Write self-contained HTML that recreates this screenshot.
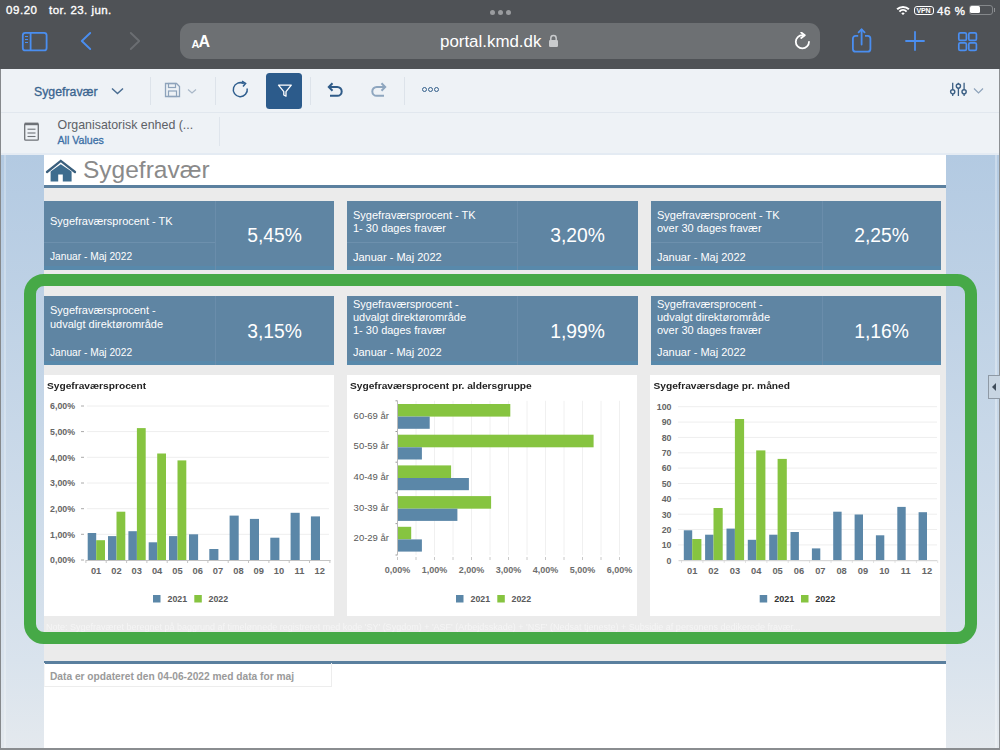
<!DOCTYPE html>
<html><head><meta charset="utf-8">
<style>
*{margin:0;padding:0;box-sizing:border-box}
html,body{width:1000px;height:750px;overflow:hidden;background:#fff;font-family:"Liberation Sans",sans-serif}
.a{position:absolute;white-space:nowrap}
.sep{position:absolute;width:1px;background:#dde3ea}
.card{position:absolute;background:#5f85a3;color:#fff;height:69px;width:290px}
.card .bb{position:absolute;left:0;right:0;bottom:0;height:4px;background:#5889ab}
.card .vd{position:absolute;left:171px;top:0;width:1px;height:69px;background:#6a8dab}
.card .hd{position:absolute;left:0;top:41px;width:171px;height:1px;background:#6d90ad}
.card .tt{position:absolute;left:6px;top:1px;width:165px;height:41px;display:flex;align-items:center;font-size:11px;line-height:13.4px}
.card .dt{position:absolute;left:6px;top:42px;height:28px;display:flex;align-items:center;font-size:10.2px}
.card .v{position:absolute;left:171px;right:0;top:0;height:69px;display:flex;align-items:center;justify-content:center;font-size:19.3px;padding-top:2.5px}
.ch{position:absolute;background:#fff;top:375px;height:241px}
.cht{position:absolute;font-size:10.2px;font-weight:bold;color:#222;top:380.2px;transform:scaleY(0.92);transform-origin:left bottom}
</style></head><body>

<div class="a" style="left:0;top:0;width:1000px;height:69px;background:#4f5256"></div>
<div class="a" style="left:6px;top:1.8px;font-size:11.5px;letter-spacing:0.55px;color:#fff;line-height:16px;-webkit-text-stroke:0.35px #fff">09.20</div>
<div class="a" style="left:49px;top:1.8px;font-size:11.5px;letter-spacing:0.45px;color:#fff;line-height:16px;-webkit-text-stroke:0.35px #fff">tor. 23. jun.</div>
<div class="a" style="left:489.5px;top:9.5px;width:5px;height:5px;border-radius:50%;background:#9a9c9f"></div>
<div class="a" style="left:497.5px;top:9.5px;width:5px;height:5px;border-radius:50%;background:#9a9c9f"></div>
<div class="a" style="left:505.5px;top:9.5px;width:5px;height:5px;border-radius:50%;background:#9a9c9f"></div>
<svg class="a" style="left:896px;top:4.5px" width="14" height="10" viewBox="0 0 14 10">
<path d="M1.1 4.3 A8.4 8.4 0 0 1 12.9 4.3" stroke="#fff" stroke-width="2" fill="none"/>
<path d="M3.4 6.6 A5.1 5.1 0 0 1 10.6 6.6" stroke="#fff" stroke-width="2" fill="none"/>
<path d="M5.3 8.4 L7 10 L8.7 8.4 A2.4 2.4 0 0 0 5.3 8.4 Z" fill="#fff"/></svg>
<div class="a" style="left:913.5px;top:5.5px;width:20px;height:9.5px;border:1.2px solid #fff;border-radius:3px;font-size:7px;line-height:7px;color:#fff;font-weight:bold;text-align:center;letter-spacing:-0.2px">VPN</div>
<div class="a" style="left:937px;top:2.5px;font-size:11.5px;letter-spacing:0.6px;color:#fff;line-height:16px;-webkit-text-stroke:0.35px #fff">46 %</div>
<div class="a" style="left:968.5px;top:4.5px;width:24px;height:10px;border:1.3px solid #85888b;border-radius:3px"></div>
<div class="a" style="left:970.2px;top:6.2px;width:10px;height:6.6px;background:#fff;border-radius:1.5px"></div>
<div class="a" style="left:993.5px;top:8px;width:1.5px;height:4px;background:#8d8f92"></div>
<svg class="a" style="left:21px;top:31px" width="28" height="22" viewBox="0 0 28 22">
<rect x="1.8" y="1.8" width="23.8" height="17.6" rx="2.5" stroke="#4a8ef0" stroke-width="1.8" fill="none"/>
<line x1="9.6" y1="1.8" x2="9.6" y2="19.4" stroke="#4a8ef0" stroke-width="1.8"/>
<line x1="4" y1="5.5" x2="7" y2="5.5" stroke="#4a8ef0" stroke-width="1"/>
<line x1="4" y1="8.5" x2="7" y2="8.5" stroke="#4a8ef0" stroke-width="1"/>
<line x1="4" y1="11.5" x2="7" y2="11.5" stroke="#4a8ef0" stroke-width="1"/>
</svg>
<svg class="a" style="left:78px;top:30px" width="16" height="22" viewBox="0 0 16 22">
<path d="M12.2 3 L3.8 11 L12.2 19" stroke="#4a8ef0" stroke-width="1.9" fill="none" stroke-linecap="round" stroke-linejoin="round"/></svg>
<svg class="a" style="left:127px;top:30px" width="16" height="22" viewBox="0 0 16 22">
<path d="M3.8 3 L12.2 11 L3.8 19" stroke="#6b6e72" stroke-width="1.9" fill="none" stroke-linecap="round" stroke-linejoin="round"/></svg>
<div class="a" style="left:180px;top:23px;width:640px;height:35.5px;background:#6d7073;border-radius:11px"></div>
<div class="a" style="left:191.5px;top:37.5px;font-size:11px;font-weight:bold;color:#fff;line-height:12px">A</div>
<div class="a" style="left:198.5px;top:33.4px;font-size:16px;font-weight:bold;color:#fff;line-height:18px">A</div>
<div class="a" style="left:440px;top:31.5px;font-size:16.9px;color:#fff;line-height:20px">portal.kmd.dk</div>
<svg class="a" style="left:548px;top:34px" width="11" height="14" viewBox="0 0 11 14">
<path d="M2.8 6 V4.2 A2.7 2.7 0 0 1 8.2 4.2 V6" stroke="#c9cbcd" stroke-width="1.5" fill="none"/>
<rect x="1" y="6" width="9" height="7" rx="1.2" fill="#c9cbcd"/></svg>
<svg class="a" style="left:793px;top:32px" width="19" height="19" viewBox="0 0 19 19">
<path d="M9.5 3.2 A6.6 6.6 0 1 0 16 9.8" stroke="#fff" stroke-width="1.8" fill="none" stroke-linecap="round"/>
<path d="M8.2 0.5 L11.8 3.2 L8.2 6" stroke="#fff" stroke-width="1.8" fill="none" stroke-linecap="round" stroke-linejoin="round"/></svg>
<svg class="a" style="left:850px;top:27px" width="24" height="27" viewBox="0 0 24 27">
<path d="M8.2 8.8 H5.6 A2.7 2.7 0 0 0 2.9 11.5 V21.9 A2.7 2.7 0 0 0 5.6 24.6 H17.7 A2.7 2.7 0 0 0 20.4 21.9 V11.5 A2.7 2.7 0 0 0 17.7 8.8 H15" stroke="#4a8ef0" stroke-width="1.8" fill="none"/>
<line x1="11.6" y1="2.5" x2="11.6" y2="17.5" stroke="#4a8ef0" stroke-width="1.8" stroke-linecap="round"/>
<path d="M8.6 5.4 L11.6 2.4 L14.6 5.4" stroke="#4a8ef0" stroke-width="1.8" fill="none" stroke-linecap="round" stroke-linejoin="round"/></svg>
<svg class="a" style="left:904px;top:30px" width="22" height="22" viewBox="0 0 22 22">
<line x1="11" y1="2" x2="11" y2="20" stroke="#4a8ef0" stroke-width="1.8" stroke-linecap="round"/>
<line x1="2" y1="11" x2="20" y2="11" stroke="#4a8ef0" stroke-width="1.8" stroke-linecap="round"/></svg>
<svg class="a" style="left:957px;top:31px" width="22" height="22" viewBox="0 0 22 22">
<rect x="1.8" y="1.8" width="7.6" height="7.6" rx="1.5" stroke="#4a8ef0" stroke-width="1.7" fill="none"/>
<rect x="11.8" y="1.8" width="7.6" height="7.6" rx="1.5" stroke="#4a8ef0" stroke-width="1.7" fill="none"/>
<rect x="1.8" y="11.8" width="7.6" height="7.6" rx="1.5" stroke="#4a8ef0" stroke-width="1.7" fill="none"/>
<rect x="11.8" y="11.8" width="7.6" height="7.6" rx="1.5" stroke="#4a8ef0" stroke-width="1.7" fill="none"/></svg>
<div class="a" style="left:0;top:69px;width:1000px;height:43px;background:#eef2f6"></div>
<div class="a" style="left:0;top:112px;width:1000px;height:1px;background:#e1e7ee"></div>
<div class="a" style="left:0;top:113px;width:1000px;height:42px;background:#eef2f6"></div>
<div class="a" style="left:34px;top:83.5px;font-size:12.3px;color:#39648f;line-height:16px;-webkit-text-stroke:0.3px #39648f">Sygefravær</div>
<svg class="a" style="left:109px;top:84px" width="17" height="12" viewBox="0 0 17 12">
<path d="M3 4.5 L8.5 9.5 L14 4.5" stroke="#4a6d92" stroke-width="1.5" fill="none"/></svg>
<div class="sep" style="left:150px;top:77px;height:28px"></div>
<svg class="a" style="left:164px;top:82px" width="17" height="16" viewBox="0 0 17 16">
<path d="M1.5 1.5 H12.5 L15.5 4.5 V14.5 H1.5 Z" stroke="#8ea3bb" stroke-width="1.3" fill="none"/>
<rect x="4.5" y="1.5" width="7" height="4" stroke="#8ea3bb" stroke-width="1.2" fill="none"/>
<rect x="4.5" y="9" width="8" height="5.5" stroke="#8ea3bb" stroke-width="1.2" fill="none"/></svg>
<svg class="a" style="left:187px;top:88px" width="10" height="7" viewBox="0 0 10 7">
<path d="M1 1.5 L5 5 L9 1.5" stroke="#a9b8c8" stroke-width="1.2" fill="none"/></svg>
<div class="sep" style="left:215px;top:77px;height:28px"></div>
<svg class="a" style="left:231px;top:80px" width="19" height="19" viewBox="0 0 19 19">
<path d="M12.8 3.6 A7 7 0 1 0 16.2 8.5" stroke="#2f5e8e" stroke-width="1.5" fill="none"/>
<path d="M11 1.2 L14.6 3.5 L12 6.6" stroke="#2f5e8e" stroke-width="1.5" fill="none"/></svg>
<div class="a" style="left:266px;top:73px;width:36px;height:36px;background:#2c5b8b;border-radius:3.5px"></div>
<svg class="a" style="left:276px;top:82px" width="17" height="17" viewBox="0 0 17 17">
<path d="M2.5 3.2 H15.3 L10 9.6 V14.2 L7.8 13 V9.6 Z" stroke="#fff" stroke-width="1.3" fill="none" stroke-linejoin="round"/></svg>
<div class="sep" style="left:310px;top:77px;height:28px"></div>
<svg class="a" style="left:326px;top:81px" width="19" height="18" viewBox="0 0 19 18">
<path d="M6.5 2.2 L2.8 6 L6.5 9.8" stroke="#2f5b88" stroke-width="2" fill="none"/>
<path d="M3 6 H11.3 A4.4 4.4 0 0 1 11.3 14.8 H4" stroke="#2f5b88" stroke-width="2" fill="none"/></svg>
<svg class="a" style="left:369px;top:81px" width="19" height="18" viewBox="0 0 19 18">
<path d="M12.5 2.2 L16.2 6 L12.5 9.8" stroke="#8ea6bf" stroke-width="2" fill="none"/>
<path d="M16 6 H7.7 A4.4 4.4 0 0 0 7.7 14.8 H15" stroke="#8ea6bf" stroke-width="2" fill="none"/></svg>
<div class="sep" style="left:404px;top:77px;height:28px"></div>
<div class="a" style="left:421.59999999999997px;top:87.2px;width:5.2px;height:5.2px;border-radius:50%;border:1.7px solid #34608b"></div>
<div class="a" style="left:427.7px;top:87.2px;width:5.2px;height:5.2px;border-radius:50%;border:1.7px solid #34608b"></div>
<div class="a" style="left:433.79999999999995px;top:87.2px;width:5.2px;height:5.2px;border-radius:50%;border:1.7px solid #34608b"></div>
<svg class="a" style="left:949px;top:81px" width="20" height="17" viewBox="0 0 20 17">
<line x1="3.7" y1="1.8" x2="3.7" y2="15" stroke="#3b5f84" stroke-width="1.3"/>
<line x1="9.4" y1="1.8" x2="9.4" y2="15" stroke="#3b5f84" stroke-width="1.3"/>
<line x1="15.1" y1="1.8" x2="15.1" y2="15" stroke="#3b5f84" stroke-width="1.3"/>
<circle cx="3.7" cy="10.8" r="2.1" fill="#eef2f6" stroke="#3b5f84" stroke-width="1.4"/>
<circle cx="9.4" cy="5.1" r="2.1" fill="#eef2f6" stroke="#3b5f84" stroke-width="1.4"/>
<circle cx="15.1" cy="10.8" r="2.1" fill="#eef2f6" stroke="#3b5f84" stroke-width="1.4"/></svg>
<svg class="a" style="left:973px;top:87px" width="11" height="8" viewBox="0 0 11 8">
<path d="M1 1.5 L5.5 6 L10 1.5" stroke="#8ea3bb" stroke-width="1.2" fill="none"/></svg>
<svg class="a" style="left:23px;top:121px" width="17" height="21" viewBox="0 0 17 21">
<rect x="1.7" y="2.6" width="13.6" height="16.6" rx="1" stroke="#6e7277" stroke-width="1.3" fill="none"/>
<rect x="1.7" y="1.6" width="13.6" height="2.6" fill="#6e7277"/>
<line x1="4.5" y1="8.2" x2="12.5" y2="8.2" stroke="#6e7277" stroke-width="1.1"/>
<line x1="4.5" y1="12" x2="12.5" y2="12" stroke="#6e7277" stroke-width="1.1"/>
<line x1="4.5" y1="15.5" x2="12.5" y2="15.5" stroke="#6e7277" stroke-width="1.1"/></svg>
<div class="a" style="left:57.5px;top:117.6px;font-size:12.4px;color:#5d6166;line-height:15px">Organisatorisk enhed (...</div>
<div class="a" style="left:57.5px;top:133.5px;font-size:10.6px;color:#3b6fa6;line-height:13px;-webkit-text-stroke:0.3px #3b6fa6">All Values</div>
<div class="sep" style="left:218.5px;top:117px;height:29px;width:1.5px;background:#dfe5ec"></div>
<div class="a" style="left:0;top:153px;width:1000px;height:2px;background:#e4ebf3"></div>
<div class="a" style="left:0;top:155px;width:44px;height:595px;background:linear-gradient(#b3cae2,#d9e3ed 85%,#e4e9ee)"></div>
<div class="a" style="left:0;top:69px;width:1.2px;height:681px;background:#86898c"></div>
<div class="a" style="left:4px;top:155px;width:2px;height:595px;background:rgba(255,255,255,0.25)"></div>
<div class="a" style="left:945.5px;top:155px;width:54.5px;height:595px;background:linear-gradient(#b3cae2,#d9e3ed 85%,#e4e9ee)"></div>
<div class="a" style="left:995px;top:155px;width:2px;height:595px;background:rgba(255,255,255,0.3)"></div>
<div class="a" style="left:998.5px;top:69px;width:1.5px;height:681px;background:#8d9093"></div>
<div class="a" style="left:44px;top:156px;width:901.5px;height:594px;background:#fff"></div>
<svg class="a" style="left:44px;top:156px" width="40" height="30" viewBox="0 0 40 30">
<path d="M3 16 L16.8 4.9 L31 16" stroke="#3a5f7d" stroke-width="2.3" fill="none" stroke-linecap="round"/>
<path d="M6.6 15.4 L16.8 8.3 L27.6 15.4 V25.6 H18.8 V18.4 H14.2 V25.6 H6.6 Z" fill="#3d6c8e"/></svg>
<div class="a" style="left:83px;top:155px;font-size:24.5px;color:#8a8a8a;line-height:30px">Sygefravær</div>
<div class="a" style="left:44px;top:185px;width:901.5px;height:3px;background:#5b809f"></div>
<div class="a" style="left:44px;top:188px;width:901.5px;height:473px;background:#ebebeb"></div>
<div class="a" style="left:44px;top:661px;width:901.5px;height:2.8px;background:#5a7f9e"></div>
<div class="a" style="left:44px;top:663px;width:288px;height:24px;border:1px solid #ededed;border-top:none;border-left-color:#f6f6f6"></div>
<div class="a" style="left:50px;top:670px;font-size:10.2px;color:#9a9a9a;font-weight:bold;line-height:14px">Data er opdateret den 04-06-2022 med data for maj</div>
<div class="card" style="left:44px;top:200.5px;width:290px"><div class="bb"></div><div class="vd" style="left:171px"></div><div class="hd"></div><div class="tt"><div>Sygefraværsprocent - TK</div></div><div class="dt" style="font-size:10.2px">Januar - Maj 2022</div><div class="v" style="left:171px">5,45%</div></div>
<div class="card" style="left:347px;top:200.5px;width:291px"><div class="bb"></div><div class="vd" style="left:170px"></div><div class="hd"></div><div class="tt"><div>Sygefraværsprocent - TK<br>1- 30 dages fravær</div></div><div class="dt" style="font-size:11px">Januar - Maj 2022</div><div class="v" style="left:170px">3,20%</div></div>
<div class="card" style="left:651px;top:200.5px;width:290px"><div class="bb"></div><div class="vd" style="left:171px"></div><div class="hd"></div><div class="tt"><div>Sygefraværsprocent - TK<br>over 30 dages fravær</div></div><div class="dt" style="font-size:11px">Januar - Maj 2022</div><div class="v" style="left:171px">2,25%</div></div>
<div class="card" style="left:44px;top:296.2px;width:290px"><div class="bb"></div><div class="vd" style="left:171px"></div><div class="tt"><div>Sygefraværsprocent -<br>udvalgt direktørområde</div></div><div class="dt" style="font-size:10.2px">Januar - Maj 2022</div><div class="v" style="left:171px">3,15%</div></div>
<div class="card" style="left:347px;top:296.2px;width:291px"><div class="bb"></div><div class="vd" style="left:170px"></div><div class="tt"><div>Sygefraværsprocent -<br>udvalgt direktørområde<br>1- 30 dages fravær</div></div><div class="dt" style="font-size:11px">Januar - Maj 2022</div><div class="v" style="left:170px">1,99%</div></div>
<div class="card" style="left:651px;top:296.2px;width:290px"><div class="bb"></div><div class="vd" style="left:171px"></div><div class="tt"><div>Sygefraværsprocent -<br>udvalgt direktørområde<br>over 30 dages fravær</div></div><div class="dt" style="font-size:11px">Januar - Maj 2022</div><div class="v" style="left:171px">1,16%</div></div>
<div class="ch" style="left:44px;width:290px"></div>
<div class="ch" style="left:347px;width:290px"></div>
<div class="ch" style="left:650px;width:290px"></div>
<div class="cht" style="left:47px">Sygefraværsprocent</div>
<div class="cht" style="left:350px">Sygefraværsprocent pr. aldersgruppe</div>
<div class="cht" style="left:653.5px">Sygefraværsdage pr. måned</div>
<svg class="a" style="left:0;top:0" width="1000" height="750" viewBox="0 0 1000 750" font-family="Liberation Sans"><line x1="81" y1="560.0" x2="84" y2="560.0" stroke="#aaa" stroke-width="1"/><text x="75" y="563.2" font-size="8.8" font-weight="bold" fill="#666" text-anchor="end">0,00%</text><line x1="87" y1="534.3" x2="329" y2="534.3" stroke="#eeeeee" stroke-width="1"/><line x1="81" y1="534.3" x2="84" y2="534.3" stroke="#aaa" stroke-width="1"/><text x="75" y="537.5" font-size="8.8" font-weight="bold" fill="#666" text-anchor="end">1,00%</text><line x1="87" y1="508.7" x2="329" y2="508.7" stroke="#eeeeee" stroke-width="1"/><line x1="81" y1="508.7" x2="84" y2="508.7" stroke="#aaa" stroke-width="1"/><text x="75" y="511.9" font-size="8.8" font-weight="bold" fill="#666" text-anchor="end">2,00%</text><line x1="87" y1="483.0" x2="329" y2="483.0" stroke="#eeeeee" stroke-width="1"/><line x1="81" y1="483.0" x2="84" y2="483.0" stroke="#aaa" stroke-width="1"/><text x="75" y="486.2" font-size="8.8" font-weight="bold" fill="#666" text-anchor="end">3,00%</text><line x1="87" y1="457.3" x2="329" y2="457.3" stroke="#eeeeee" stroke-width="1"/><line x1="81" y1="457.3" x2="84" y2="457.3" stroke="#aaa" stroke-width="1"/><text x="75" y="460.5" font-size="8.8" font-weight="bold" fill="#666" text-anchor="end">4,00%</text><line x1="87" y1="431.6" x2="329" y2="431.6" stroke="#eeeeee" stroke-width="1"/><line x1="81" y1="431.6" x2="84" y2="431.6" stroke="#aaa" stroke-width="1"/><text x="75" y="434.8" font-size="8.8" font-weight="bold" fill="#666" text-anchor="end">5,00%</text><line x1="87" y1="406.0" x2="329" y2="406.0" stroke="#eeeeee" stroke-width="1"/><line x1="81" y1="406.0" x2="84" y2="406.0" stroke="#aaa" stroke-width="1"/><text x="75" y="409.2" font-size="8.8" font-weight="bold" fill="#666" text-anchor="end">6,00%</text><rect x="87.7" y="533.0" width="8.5" height="27.0" fill="#5b87a8"/><rect x="96.2" y="540.2" width="8.8" height="19.8" fill="#86c440"/><text x="96.1" y="573.5" font-size="9.3" font-weight="bold" fill="#666" text-anchor="middle">01</text><rect x="108.0" y="536.1" width="8.5" height="23.9" fill="#5b87a8"/><rect x="116.5" y="511.7" width="8.8" height="48.3" fill="#86c440"/><text x="116.4" y="573.5" font-size="9.3" font-weight="bold" fill="#666" text-anchor="middle">02</text><rect x="128.4" y="531.2" width="8.5" height="28.8" fill="#5b87a8"/><rect x="136.9" y="428.1" width="8.8" height="131.9" fill="#86c440"/><text x="136.7" y="573.5" font-size="9.3" font-weight="bold" fill="#666" text-anchor="middle">03</text><rect x="148.7" y="542.3" width="8.5" height="17.7" fill="#5b87a8"/><rect x="157.2" y="453.5" width="8.8" height="106.5" fill="#86c440"/><text x="157.1" y="573.5" font-size="9.3" font-weight="bold" fill="#666" text-anchor="middle">04</text><rect x="169.0" y="536.1" width="8.5" height="23.9" fill="#5b87a8"/><rect x="177.5" y="460.4" width="8.8" height="99.6" fill="#86c440"/><text x="177.4" y="573.5" font-size="9.3" font-weight="bold" fill="#666" text-anchor="middle">05</text><rect x="189.0" y="534.3" width="9.1" height="25.7" fill="#5b87a8"/><text x="197.7" y="573.5" font-size="9.3" font-weight="bold" fill="#666" text-anchor="middle">06</text><rect x="209.3" y="549.0" width="9.1" height="11.0" fill="#5b87a8"/><text x="218.0" y="573.5" font-size="9.3" font-weight="bold" fill="#666" text-anchor="middle">07</text><rect x="229.6" y="515.6" width="9.1" height="44.4" fill="#5b87a8"/><text x="238.4" y="573.5" font-size="9.3" font-weight="bold" fill="#666" text-anchor="middle">08</text><rect x="249.9" y="518.9" width="9.1" height="41.1" fill="#5b87a8"/><text x="258.7" y="573.5" font-size="9.3" font-weight="bold" fill="#666" text-anchor="middle">09</text><rect x="270.3" y="537.7" width="9.1" height="22.3" fill="#5b87a8"/><text x="279.0" y="573.5" font-size="9.3" font-weight="bold" fill="#666" text-anchor="middle">10</text><rect x="290.6" y="512.8" width="9.1" height="47.2" fill="#5b87a8"/><text x="299.4" y="573.5" font-size="9.3" font-weight="bold" fill="#666" text-anchor="middle">11</text><rect x="310.9" y="516.4" width="9.1" height="43.6" fill="#5b87a8"/><text x="319.7" y="573.5" font-size="9.3" font-weight="bold" fill="#666" text-anchor="middle">12</text><line x1="85.9" y1="560" x2="85.9" y2="563" stroke="#c4c4c4" stroke-width="1"/><line x1="106.2" y1="560" x2="106.2" y2="563" stroke="#c4c4c4" stroke-width="1"/><line x1="126.6" y1="560" x2="126.6" y2="563" stroke="#c4c4c4" stroke-width="1"/><line x1="146.9" y1="560" x2="146.9" y2="563" stroke="#c4c4c4" stroke-width="1"/><line x1="167.2" y1="560" x2="167.2" y2="563" stroke="#c4c4c4" stroke-width="1"/><line x1="187.6" y1="560" x2="187.6" y2="563" stroke="#c4c4c4" stroke-width="1"/><line x1="207.9" y1="560" x2="207.9" y2="563" stroke="#c4c4c4" stroke-width="1"/><line x1="228.2" y1="560" x2="228.2" y2="563" stroke="#c4c4c4" stroke-width="1"/><line x1="248.5" y1="560" x2="248.5" y2="563" stroke="#c4c4c4" stroke-width="1"/><line x1="268.9" y1="560" x2="268.9" y2="563" stroke="#c4c4c4" stroke-width="1"/><line x1="289.2" y1="560" x2="289.2" y2="563" stroke="#c4c4c4" stroke-width="1"/><line x1="309.5" y1="560" x2="309.5" y2="563" stroke="#c4c4c4" stroke-width="1"/><line x1="329.9" y1="560" x2="329.9" y2="563" stroke="#c4c4c4" stroke-width="1"/><line x1="86" y1="560.5" x2="330.5" y2="560.5" stroke="#c4c4c4" stroke-width="1"/><rect x="153" y="595" width="7.5" height="7.5" fill="#5b87a8"/><text x="167.5" y="602.2" font-size="8.8" fill="#5a5a5a" font-weight="bold">2021</text><rect x="194.3" y="595" width="7.5" height="7.5" fill="#86c440"/><text x="208.5" y="602.2" font-size="8.8" fill="#5a5a5a" font-weight="bold">2022</text><line x1="416.0" y1="400.8" x2="416.0" y2="555" stroke="#f0f0f0" stroke-width="1"/><line x1="434.5" y1="400.8" x2="434.5" y2="555" stroke="#f0f0f0" stroke-width="1"/><line x1="453.0" y1="400.8" x2="453.0" y2="555" stroke="#f0f0f0" stroke-width="1"/><line x1="471.5" y1="400.8" x2="471.5" y2="555" stroke="#f0f0f0" stroke-width="1"/><line x1="490.0" y1="400.8" x2="490.0" y2="555" stroke="#f0f0f0" stroke-width="1"/><line x1="508.5" y1="400.8" x2="508.5" y2="555" stroke="#f0f0f0" stroke-width="1"/><line x1="527.0" y1="400.8" x2="527.0" y2="555" stroke="#f0f0f0" stroke-width="1"/><line x1="545.5" y1="400.8" x2="545.5" y2="555" stroke="#f0f0f0" stroke-width="1"/><line x1="564.0" y1="400.8" x2="564.0" y2="555" stroke="#f0f0f0" stroke-width="1"/><line x1="582.5" y1="400.8" x2="582.5" y2="555" stroke="#f0f0f0" stroke-width="1"/><line x1="601.0" y1="400.8" x2="601.0" y2="555" stroke="#f0f0f0" stroke-width="1"/><line x1="619.5" y1="400.8" x2="619.5" y2="555" stroke="#f0f0f0" stroke-width="1"/><rect x="397.5" y="404.0" width="112.8" height="12.6" fill="#86c440"/><rect x="397.5" y="416.6" width="32.2" height="12.2" fill="#5b87a8"/><text x="389" y="418.6" font-size="9.5" fill="#575757" text-anchor="end">60-69 år</text><line x1="395.5" y1="400.8" x2="397.5" y2="400.8" stroke="#999" stroke-width="1"/><rect x="397.5" y="434.7" width="196.1" height="12.6" fill="#86c440"/><rect x="397.5" y="447.3" width="24.4" height="12.2" fill="#5b87a8"/><text x="389" y="449.2" font-size="9.5" fill="#575757" text-anchor="end">50-59 år</text><line x1="395.5" y1="431.5" x2="397.5" y2="431.5" stroke="#999" stroke-width="1"/><rect x="397.5" y="465.4" width="53.6" height="12.6" fill="#86c440"/><rect x="397.5" y="478.0" width="71.4" height="12.2" fill="#5b87a8"/><text x="389" y="479.9" font-size="9.5" fill="#575757" text-anchor="end">40-49 år</text><line x1="395.5" y1="462.2" x2="397.5" y2="462.2" stroke="#999" stroke-width="1"/><rect x="397.5" y="496.1" width="93.6" height="12.6" fill="#86c440"/><rect x="397.5" y="508.7" width="59.9" height="12.2" fill="#5b87a8"/><text x="389" y="510.6" font-size="9.5" fill="#575757" text-anchor="end">30-39 år</text><line x1="395.5" y1="492.9" x2="397.5" y2="492.9" stroke="#999" stroke-width="1"/><rect x="397.5" y="526.8" width="13.7" height="12.6" fill="#86c440"/><rect x="397.5" y="539.4" width="24.4" height="12.2" fill="#5b87a8"/><text x="389" y="541.4" font-size="9.5" fill="#575757" text-anchor="end">20-29 år</text><line x1="395.5" y1="523.6" x2="397.5" y2="523.6" stroke="#999" stroke-width="1"/><line x1="395.5" y1="555" x2="397.5" y2="555" stroke="#999" stroke-width="1"/><line x1="397.5" y1="400.8" x2="397.5" y2="555" stroke="#bbb" stroke-width="1"/><text x="397.5" y="572.6" font-size="9" fill="#6e6e6e" text-anchor="middle" font-weight="bold">0,00%</text><text x="434.5" y="572.6" font-size="9" fill="#6e6e6e" text-anchor="middle" font-weight="bold">1,00%</text><text x="471.5" y="572.6" font-size="9" fill="#6e6e6e" text-anchor="middle" font-weight="bold">2,00%</text><text x="508.5" y="572.6" font-size="9" fill="#6e6e6e" text-anchor="middle" font-weight="bold">3,00%</text><text x="545.5" y="572.6" font-size="9" fill="#6e6e6e" text-anchor="middle" font-weight="bold">4,00%</text><text x="582.5" y="572.6" font-size="9" fill="#6e6e6e" text-anchor="middle" font-weight="bold">5,00%</text><text x="619.5" y="572.6" font-size="9" fill="#6e6e6e" text-anchor="middle" font-weight="bold">6,00%</text><line x1="397.5" y1="557" x2="397.5" y2="560" stroke="#c8c8c8" stroke-width="1"/><line x1="416.0" y1="557" x2="416.0" y2="560" stroke="#c8c8c8" stroke-width="1"/><line x1="434.5" y1="557" x2="434.5" y2="560" stroke="#c8c8c8" stroke-width="1"/><line x1="453.0" y1="557" x2="453.0" y2="560" stroke="#c8c8c8" stroke-width="1"/><line x1="471.5" y1="557" x2="471.5" y2="560" stroke="#c8c8c8" stroke-width="1"/><line x1="490.0" y1="557" x2="490.0" y2="560" stroke="#c8c8c8" stroke-width="1"/><line x1="508.5" y1="557" x2="508.5" y2="560" stroke="#c8c8c8" stroke-width="1"/><line x1="527.0" y1="557" x2="527.0" y2="560" stroke="#c8c8c8" stroke-width="1"/><line x1="545.5" y1="557" x2="545.5" y2="560" stroke="#c8c8c8" stroke-width="1"/><line x1="564.0" y1="557" x2="564.0" y2="560" stroke="#c8c8c8" stroke-width="1"/><line x1="582.5" y1="557" x2="582.5" y2="560" stroke="#c8c8c8" stroke-width="1"/><line x1="601.0" y1="557" x2="601.0" y2="560" stroke="#c8c8c8" stroke-width="1"/><line x1="619.5" y1="557" x2="619.5" y2="560" stroke="#c8c8c8" stroke-width="1"/><rect x="456" y="595" width="7.5" height="7.5" fill="#5b87a8"/><text x="470.5" y="602.2" font-size="8.8" fill="#5a5a5a" font-weight="bold">2021</text><rect x="497.3" y="595" width="7.5" height="7.5" fill="#86c440"/><text x="511.5" y="602.2" font-size="8.8" fill="#5a5a5a" font-weight="bold">2022</text><text x="671.5" y="563.5" font-size="8.8" font-weight="bold" fill="#666" text-anchor="end">0</text><line x1="678" y1="544.9" x2="937" y2="544.9" stroke="#eeeeee" stroke-width="1"/><text x="671.5" y="548.1" font-size="8.8" font-weight="bold" fill="#666" text-anchor="end">10</text><line x1="678" y1="529.5" x2="937" y2="529.5" stroke="#eeeeee" stroke-width="1"/><text x="671.5" y="532.8" font-size="8.8" font-weight="bold" fill="#666" text-anchor="end">20</text><line x1="678" y1="514.2" x2="937" y2="514.2" stroke="#eeeeee" stroke-width="1"/><text x="671.5" y="517.5" font-size="8.8" font-weight="bold" fill="#666" text-anchor="end">30</text><line x1="678" y1="498.8" x2="937" y2="498.8" stroke="#eeeeee" stroke-width="1"/><text x="671.5" y="502.1" font-size="8.8" font-weight="bold" fill="#666" text-anchor="end">40</text><line x1="678" y1="483.5" x2="937" y2="483.5" stroke="#eeeeee" stroke-width="1"/><text x="671.5" y="486.8" font-size="8.8" font-weight="bold" fill="#666" text-anchor="end">50</text><line x1="678" y1="468.1" x2="937" y2="468.1" stroke="#eeeeee" stroke-width="1"/><text x="671.5" y="471.4" font-size="8.8" font-weight="bold" fill="#666" text-anchor="end">60</text><line x1="678" y1="452.8" x2="937" y2="452.8" stroke="#eeeeee" stroke-width="1"/><text x="671.5" y="456.1" font-size="8.8" font-weight="bold" fill="#666" text-anchor="end">70</text><line x1="678" y1="437.4" x2="937" y2="437.4" stroke="#eeeeee" stroke-width="1"/><text x="671.5" y="440.7" font-size="8.8" font-weight="bold" fill="#666" text-anchor="end">80</text><line x1="678" y1="422.1" x2="937" y2="422.1" stroke="#eeeeee" stroke-width="1"/><text x="671.5" y="425.4" font-size="8.8" font-weight="bold" fill="#666" text-anchor="end">90</text><line x1="678" y1="406.7" x2="937" y2="406.7" stroke="#eeeeee" stroke-width="1"/><text x="671.5" y="410.0" font-size="8.8" font-weight="bold" fill="#666" text-anchor="end">100</text><rect x="683.8" y="530.3" width="8.4" height="29.9" fill="#5b87a8"/><rect x="692.2" y="539.0" width="9.2" height="21.2" fill="#86c440"/><text x="692.2" y="573.5" font-size="9.3" font-weight="bold" fill="#666" text-anchor="middle">01</text><rect x="705.1" y="534.7" width="8.4" height="25.5" fill="#5b87a8"/><rect x="713.5" y="508.0" width="9.2" height="52.2" fill="#86c440"/><text x="713.5" y="573.5" font-size="9.3" font-weight="bold" fill="#666" text-anchor="middle">02</text><rect x="726.5" y="528.6" width="8.4" height="31.6" fill="#5b87a8"/><rect x="734.9" y="419.0" width="9.2" height="141.2" fill="#86c440"/><text x="734.9" y="573.5" font-size="9.3" font-weight="bold" fill="#666" text-anchor="middle">03</text><rect x="747.8" y="539.8" width="8.4" height="20.4" fill="#5b87a8"/><rect x="756.2" y="450.4" width="9.2" height="109.8" fill="#86c440"/><text x="756.2" y="573.5" font-size="9.3" font-weight="bold" fill="#666" text-anchor="middle">04</text><rect x="769.2" y="534.7" width="8.4" height="25.5" fill="#5b87a8"/><rect x="777.6" y="458.9" width="9.2" height="101.3" fill="#86c440"/><text x="777.6" y="573.5" font-size="9.3" font-weight="bold" fill="#666" text-anchor="middle">05</text><rect x="790.5" y="532.0" width="8.4" height="28.2" fill="#5b87a8"/><text x="798.9" y="573.5" font-size="9.3" font-weight="bold" fill="#666" text-anchor="middle">06</text><rect x="811.9" y="548.4" width="8.4" height="11.8" fill="#5b87a8"/><text x="820.3" y="573.5" font-size="9.3" font-weight="bold" fill="#666" text-anchor="middle">07</text><rect x="833.2" y="511.7" width="8.4" height="48.5" fill="#5b87a8"/><text x="841.6" y="573.5" font-size="9.3" font-weight="bold" fill="#666" text-anchor="middle">08</text><rect x="854.6" y="514.5" width="8.4" height="45.7" fill="#5b87a8"/><text x="863.0" y="573.5" font-size="9.3" font-weight="bold" fill="#666" text-anchor="middle">09</text><rect x="875.9" y="535.3" width="8.4" height="24.9" fill="#5b87a8"/><text x="884.3" y="573.5" font-size="9.3" font-weight="bold" fill="#666" text-anchor="middle">10</text><rect x="897.3" y="506.9" width="8.4" height="53.3" fill="#5b87a8"/><text x="905.7" y="573.5" font-size="9.3" font-weight="bold" fill="#666" text-anchor="middle">11</text><rect x="918.6" y="512.2" width="8.4" height="48.0" fill="#5b87a8"/><text x="927.0" y="573.5" font-size="9.3" font-weight="bold" fill="#666" text-anchor="middle">12</text><line x1="681.5" y1="560.2" x2="681.5" y2="563" stroke="#e4e4e4" stroke-width="1"/><line x1="702.9" y1="560.2" x2="702.9" y2="563" stroke="#e4e4e4" stroke-width="1"/><line x1="724.2" y1="560.2" x2="724.2" y2="563" stroke="#e4e4e4" stroke-width="1"/><line x1="745.5" y1="560.2" x2="745.5" y2="563" stroke="#e4e4e4" stroke-width="1"/><line x1="766.9" y1="560.2" x2="766.9" y2="563" stroke="#e4e4e4" stroke-width="1"/><line x1="788.2" y1="560.2" x2="788.2" y2="563" stroke="#e4e4e4" stroke-width="1"/><line x1="809.6" y1="560.2" x2="809.6" y2="563" stroke="#e4e4e4" stroke-width="1"/><line x1="831.0" y1="560.2" x2="831.0" y2="563" stroke="#e4e4e4" stroke-width="1"/><line x1="852.3" y1="560.2" x2="852.3" y2="563" stroke="#e4e4e4" stroke-width="1"/><line x1="873.6" y1="560.2" x2="873.6" y2="563" stroke="#e4e4e4" stroke-width="1"/><line x1="895.0" y1="560.2" x2="895.0" y2="563" stroke="#e4e4e4" stroke-width="1"/><line x1="916.4" y1="560.2" x2="916.4" y2="563" stroke="#e4e4e4" stroke-width="1"/><line x1="937.7" y1="560.2" x2="937.7" y2="563" stroke="#e4e4e4" stroke-width="1"/><line x1="678.5" y1="560.7" x2="937" y2="560.7" stroke="#d0d0d0" stroke-width="1"/><rect x="759.7" y="595" width="7.5" height="7.5" fill="#5b87a8"/><text x="774.2" y="602.2" font-size="9" fill="#333" font-weight="bold">2021</text><rect x="801.0" y="595" width="7.5" height="7.5" fill="#86c440"/><text x="815.2" y="602.2" font-size="9" fill="#333" font-weight="bold">2022</text></svg>
<div class="a" style="left:46px;top:621px;font-size:9px;color:rgba(255,255,255,0.5);line-height:12px;filter:blur(0.6px)">Note: Sygefraværet beregnet på baggrund af timelønnede registreret med kode 'SY' (Sygdom) + 'ASF' (Arbejdsskade) + 'NSF' (Nedsat tjeneste) + Subsidie af personens dedikerede fravær...</div>
<div class="a" style="left:24px;top:274px;width:953px;height:369.8px;border:12px solid #46a947;border-radius:20px"></div>
<div class="a" style="left:988px;top:375px;width:12px;height:24px;background:#c8d5e2;border:1px solid #8e99a5;border-right:none"></div>
<svg class="a" style="left:990px;top:382px" width="8" height="10" viewBox="0 0 8 10"><path d="M6 1 L2 5 L6 9 Z" fill="#3f4c5a"/></svg>
<div class="a" style="left:0;top:748px;width:1000px;height:2px;background:#8a8d90"></div>
</body></html>
